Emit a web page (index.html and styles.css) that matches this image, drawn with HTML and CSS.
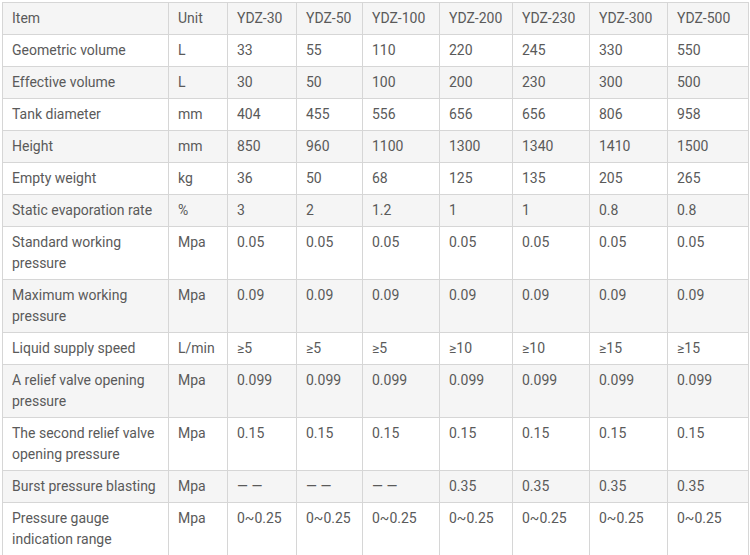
FILE: index.html
```html
<!DOCTYPE html>
<html>
<head>
<meta charset="utf-8">
<link rel="stylesheet" href="styles.css">
</head>
<body>
<table class="spec">
<colgroup>
<col class="c-item"><col class="c-unit"><col class="c-30"><col class="c-50"><col class="c-100"><col class="c-200"><col class="c-230"><col class="c-300"><col class="c-500">
</colgroup>
<thead>
<tr><td>Item</td><td>Unit</td><td>YDZ-30</td><td>YDZ-50</td><td>YDZ-100</td><td>YDZ-200</td><td>YDZ-230</td><td>YDZ-300</td><td>YDZ-500</td></tr>
</thead>
<tbody>
<tr><td>Geometric volume</td><td>L</td><td>33</td><td>55</td><td>110</td><td>220</td><td>245</td><td>330</td><td>550</td></tr>
<tr><td>Effective volume</td><td>L</td><td>30</td><td>50</td><td>100</td><td>200</td><td>230</td><td>300</td><td>500</td></tr>
<tr><td>Tank diameter</td><td>mm</td><td>404</td><td>455</td><td>556</td><td>656</td><td>656</td><td>806</td><td>958</td></tr>
<tr><td>Height</td><td>mm</td><td>850</td><td>960</td><td>1100</td><td>1300</td><td>1340</td><td>1410</td><td>1500</td></tr>
<tr><td>Empty weight</td><td>kg</td><td>36</td><td>50</td><td>68</td><td>125</td><td>135</td><td>205</td><td>265</td></tr>
<tr><td>Static evaporation rate</td><td>%</td><td>3</td><td>2</td><td>1.2</td><td>1</td><td>1</td><td>0.8</td><td>0.8</td></tr>
<tr><td>Standard working pressure</td><td>Mpa</td><td>0.05</td><td>0.05</td><td>0.05</td><td>0.05</td><td>0.05</td><td>0.05</td><td>0.05</td></tr>
<tr><td>Maximum working pressure</td><td>Mpa</td><td>0.09</td><td>0.09</td><td>0.09</td><td>0.09</td><td>0.09</td><td>0.09</td><td>0.09</td></tr>
<tr><td>Liquid supply speed</td><td>L/min</td><td>≥5</td><td>≥5</td><td>≥5</td><td>≥10</td><td>≥10</td><td>≥15</td><td>≥15</td></tr>
<tr><td>A relief valve opening pressure</td><td>Mpa</td><td>0.099</td><td>0.099</td><td>0.099</td><td>0.099</td><td>0.099</td><td>0.099</td><td>0.099</td></tr>
<tr><td>The second relief valve opening pressure</td><td>Mpa</td><td>0.15</td><td>0.15</td><td>0.15</td><td>0.15</td><td>0.15</td><td>0.15</td><td>0.15</td></tr>
<tr><td>Burst pressure blasting</td><td>Mpa</td><td>— —</td><td>— —</td><td>— —</td><td>0.35</td><td>0.35</td><td>0.35</td><td>0.35</td></tr>
<tr><td>Pressure gauge indication range</td><td>Mpa</td><td>0~0.25</td><td>0~0.25</td><td>0~0.25</td><td>0~0.25</td><td>0~0.25</td><td>0~0.25</td><td>0~0.25</td></tr>
</tbody>
</table>
</body>
</html>
```
FILE: styles.css
```css
html, body {
  margin: 0;
  padding: 0;
  background: #ffffff;
}
body {
  padding: 2px 0 0 2px;
}
.spec {
  border-collapse: collapse;
  table-layout: fixed;
  width: 747px;
  font-family: Roboto, "Liberation Sans", sans-serif;
  font-size: 14px;
  line-height: 21px;
  color: #5a5a5a;
}
.spec td {
  border: 1px solid #d6d6d6;
  padding: 5px 8px 5px 9px;
  vertical-align: top;
  text-align: left;
}
.spec thead tr,
.spec tbody tr:nth-child(even) {
  background: #f5f5f5;
}
.c-item { width: 166px; }
.c-unit { width: 59px; }
.c-30 { width: 69px; }
.c-50 { width: 66px; }
.c-100 { width: 77px; }
.c-200 { width: 73px; }
.c-230 { width: 77px; }
.c-300 { width: 78px; }
.c-500 { width: 81px; }
```
